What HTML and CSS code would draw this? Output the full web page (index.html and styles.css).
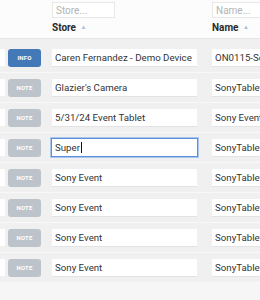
FILE: index.html
```html
<!DOCTYPE html>
<html lang="en">
<head>
    <meta charset="UTF-8">
    <title>Devices</title>
    <link rel="stylesheet" href="styles.css">
</head>
<body>
    <div class="grid">
        <div class="head">
            <div class="edge"></div>
            <div class="btncol"></div>
            <div class="hcell store-col">
                <input class="filter" type="text" placeholder="Store...">
                <div class="title">Store <span class="sort">&#9650;</span></div>
            </div>
            <div class="hcell name-col">
                <input class="filter" type="text" placeholder="Name...">
                <div class="title">Name <span class="sort">&#9650;</span></div>
            </div>
        </div>

        <div class="rows">
            <div class="row">
                <div class="edge"></div>
                <span class="tag info">INFO</span>
                <input class="cell store-in" type="text" value="Caren Fernandez - Demo Device">
                <input class="cell name-in" type="text" value="ON0115-SonyTablet">
            </div>
            <div class="row">
                <div class="edge"></div>
                <span class="tag">NOTE</span>
                <input class="cell store-in" type="text" value="Glazier's Camera">
                <input class="cell name-in" type="text" value="SonyTablet02">
            </div>
            <div class="row">
                <div class="edge"></div>
                <span class="tag">NOTE</span>
                <input class="cell store-in" type="text" value="5/31/24 Event Tablet">
                <input class="cell name-in" type="text" value="Sony Event Tablet">
            </div>
            <div class="row">
                <div class="edge"></div>
                <span class="tag">NOTE</span>
                <!-- the cell being edited -->
                <div class="cell store-in focused">Super<span class="caret"></span></div>
                <input class="cell name-in" type="text" value="SonyTablet04">
            </div>
            <div class="row">
                <div class="edge"></div>
                <span class="tag">NOTE</span>
                <input class="cell store-in" type="text" value="Sony Event">
                <input class="cell name-in" type="text" value="SonyTablet05">
            </div>
            <div class="row">
                <div class="edge"></div>
                <span class="tag">NOTE</span>
                <input class="cell store-in" type="text" value="Sony Event">
                <input class="cell name-in" type="text" value="SonyTablet06">
            </div>
            <div class="row">
                <div class="edge"></div>
                <span class="tag">NOTE</span>
                <input class="cell store-in" type="text" value="Sony Event">
                <input class="cell name-in" type="text" value="SonyTablet07">
            </div>
            <div class="row">
                <div class="edge"></div>
                <span class="tag">NOTE</span>
                <input class="cell store-in" type="text" value="Sony Event">
                <input class="cell name-in" type="text" value="SonyTablet08">
            </div>
        </div>
    </div>
</body>
</html>
```

FILE: styles.css
```css
body {
    margin: 0;
    font-family: Roboto, 'Liberation Sans', sans-serif;
    background: #f6f6f6;
    color: #333;
    width: 260px;
    height: 300px;
    overflow: hidden;
}

.grid {
    width: 260px;
    overflow: hidden;
}

/* 表头 */
.head {
    display: flex;
    height: 38px;
    background: #fcfcfc;
    border-bottom: 1px solid #e6e6e6;
}

.head .edge {
    flex: none;
    width: 5px;
}

.btncol {
    flex: none;
    width: 33px;
    margin-left: 3px;
}

.hcell {
    flex: none;
    padding-top: 2px;
}

.store-col {
    width: 145px;
    margin-left: 11px;
}

.name-col {
    width: 80px;
    margin-left: 15px;
}

.filter {
    display: block;
    width: 63px;
    height: 16px;
    padding: 0 3px;
    border: 1px solid #e8e8e8;
    box-sizing: border-box;
    background: #fff;
    font-family: inherit;
    font-size: 10px;
    color: #333;
    outline: none;
}

.filter::placeholder {
    color: #b4b4b4;
}

.title {
    margin-top: 4px;
    font-size: 10px;
    font-weight: bold;
    color: #2a2a2a;
}

.sort {
    margin-left: 2px;
    font-size: 6px;
    color: #aac0da;
    vertical-align: 2px;
}

/* 行 */
.rows {
    padding-top: 4px;
    background: #f0f0f0;
}

.row {
    display: flex;
    align-items: center;
    height: 30px;
    box-sizing: border-box;
    border-bottom: 1px solid #f8f8f8;
}

.row .edge {
    flex: none;
    width: 5px;
    height: 17px;
    background: #fff;
}

.tag {
    flex: none;
    display: flex;
    align-items: center;
    justify-content: center;
    width: 33px;
    height: 18px;
    margin-left: 3px;
    border-radius: 3px;
    background: #bcc3ca;
    color: #fff;
    font-size: 6px;
    font-weight: bold;
    letter-spacing: 0.2px;
}

.tag.info {
    background: #4479b7;
}

.cell {
    flex: none;
    display: block;
    height: 17px;
    padding: 0 3px;
    border: none;
    box-sizing: border-box;
    background: #fff;
    box-shadow: 0 1px 0 #e3e3e3;
    font-family: inherit;
    font-size: 9.7px;
    line-height: 17px;
    color: #333;
    outline: none;
}

.store-in {
    width: 145px;
    margin-left: 11px;
}

.name-in {
    width: 80px;
    margin-left: 15px;
}

.focused {
    box-shadow: 0 0 0 1px #5a8fdc, 0 0 0 2px #a9c6ef;
}

.caret {
    display: inline-block;
    width: 1px;
    height: 11px;
    margin-left: 1px;
    vertical-align: -2px;
    background: #111;
}
```
